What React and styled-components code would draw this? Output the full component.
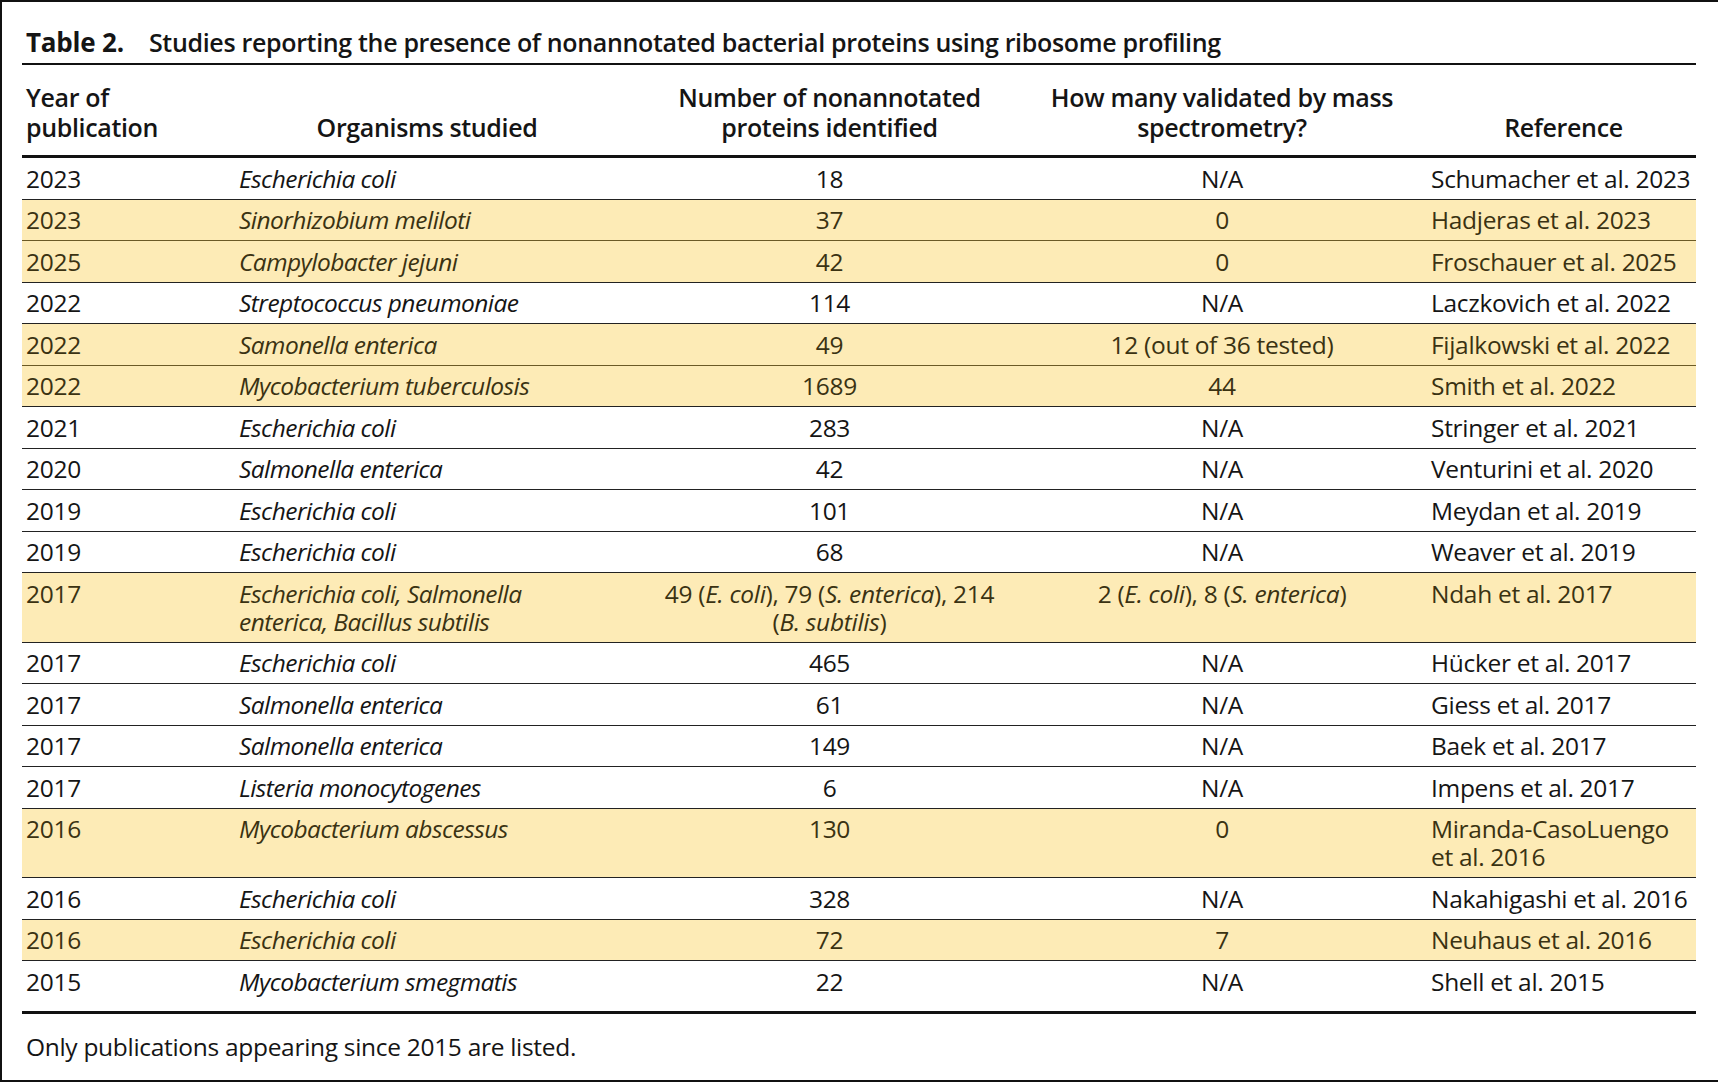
import styled, { createGlobalStyle } from "styled-components";

const GlobalStyle = createGlobalStyle`
  html, body {
    margin: 0;
    padding: 0;
    background: #ffffff;
  }
  body {
    font-family: "Open Sans", "Noto Sans", "Liberation Sans", sans-serif;
    color: #151515;
  }
`;

const rows = [
  { year: "2023", org: "Escherichia coli", num: "18", ms: "N/A", ref: "Schumacher et al. 2023" },
  { year: "2023", org: "Sinorhizobium meliloti", num: "37", ms: "0", ref: "Hadjeras et al. 2023", hl: true },
  { year: "2025", org: "Campylobacter jejuni", num: "42", ms: "0", ref: "Froschauer et al. 2025", hl: true },
  { year: "2022", org: "Streptococcus pneumoniae", num: "114", ms: "N/A", ref: "Laczkovich et al. 2022" },
  { year: "2022", org: "Samonella enterica", num: "49", ms: "12 (out of 36 tested)", ref: "Fijalkowski et al. 2022", hl: true },
  { year: "2022", org: "Mycobacterium tuberculosis", num: "1689", ms: "44", ref: "Smith et al. 2022", hl: true },
  { year: "2021", org: "Escherichia coli", num: "283", ms: "N/A", ref: "Stringer et al. 2021" },
  { year: "2020", org: "Salmonella enterica", num: "42", ms: "N/A", ref: "Venturini et al. 2020" },
  { year: "2019", org: "Escherichia coli", num: "101", ms: "N/A", ref: "Meydan et al. 2019" },
  { year: "2019", org: "Escherichia coli", num: "68", ms: "N/A", ref: "Weaver et al. 2019" },
  {
    year: "2017",
    org: (
      <>
        Escherichia coli, Salmonella
        <br />
        enterica, Bacillus subtilis
      </>
    ),
    num: (
      <>
        49 (<i>E. coli</i>), 79 (<i>S. enterica</i>), 214
        <br />
        (<i>B. subtilis</i>)
      </>
    ),
    ms: (
      <>
        2 (<i>E. coli</i>), 8 (<i>S. enterica</i>)
      </>
    ),
    ref: "Ndah et al. 2017",
    hl: true,
  },
  { year: "2017", org: "Escherichia coli", num: "465", ms: "N/A", ref: "Hücker et al. 2017" },
  { year: "2017", org: "Salmonella enterica", num: "61", ms: "N/A", ref: "Giess et al. 2017" },
  { year: "2017", org: "Salmonella enterica", num: "149", ms: "N/A", ref: "Baek et al. 2017" },
  { year: "2017", org: "Listeria monocytogenes", num: "6", ms: "N/A", ref: "Impens et al. 2017" },
  {
    year: "2016",
    org: "Mycobacterium abscessus",
    num: "130",
    ms: "0",
    ref: (
      <>
        Miranda-CasoLuengo
        <br />
        et al. 2016
      </>
    ),
    hl: true,
  },
  { year: "2016", org: "Escherichia coli", num: "328", ms: "N/A", ref: "Nakahigashi et al. 2016" },
  { year: "2016", org: "Escherichia coli", num: "72", ms: "7", ref: "Neuhaus et al. 2016", hl: true },
  { year: "2015", org: "Mycobacterium smegmatis", num: "22", ms: "N/A", ref: "Shell et al. 2015" },
];

function App() {
  return (
    <>
      <GlobalStyle />
      <Frame>
        <Caption>
          <CaptionLabel>Table 2.</CaptionLabel>
          <CaptionText>
            Studies reporting the presence of nonannotated bacterial proteins using ribosome profiling
          </CaptionText>
        </Caption>
        <Table>
          <HeadRow>
            <HeadCell>
              Year of
              <br />
              publication
            </HeadCell>
            <HeadCell align="center">Organisms studied</HeadCell>
            <HeadCell align="center">
              Number of nonannotated
              <br />
              proteins identified
            </HeadCell>
            <HeadCell align="center">
              How many validated by mass
              <br />
              spectrometry?
            </HeadCell>
            <HeadCell align="center" pad="31px">
              Reference
            </HeadCell>
          </HeadRow>
          {rows.map((r, i) => {
            const next = rows[i + 1];
            const last = i === rows.length - 1;
            return (
              <Row
                key={i}
                $hl={r.hl}
                $soft={r.hl && next && next.hl}
                $last={last}
              >
                <Cell>{r.year}</Cell>
                <Cell $italic>{r.org}</Cell>
                <Cell align="center">{r.num}</Cell>
                <Cell align="center">{r.ms}</Cell>
                <Cell pad="31px">{r.ref}</Cell>
              </Row>
            );
          })}
        </Table>
        <Footnote>Only publications appearing since 2015 are listed.</Footnote>
      </Frame>
    </>
  );
}

const Frame = styled.div`
  box-sizing: border-box;
  height: 1082px;
  border-top: 2px solid #111;
  border-left: 2px solid #111;
  border-bottom: 2px solid #111;
  padding-left: 20px;
  width: 1718px;
  overflow: hidden;
`;

const Caption = styled.div`
  width: 1674px;
  display: flex;
  align-items: baseline;
  padding: 24px 0 5px 4px;
  box-sizing: border-box;
  border-bottom: 2px solid #111;
  line-height: 32px;
  white-space: nowrap;
`;

const CaptionLabel = styled.span`
  font-size: 26px;
  font-weight: 700;
  letter-spacing: -0.2px;
  margin-right: 25px;
`;

const CaptionText = styled.span`
  font-size: 25px;
  font-weight: 600;
  letter-spacing: -0.33px;
`;

const Table = styled.div`
  width: 1674px;
  display: flex;
  flex-direction: column;
`;

const columns = "213px 380px 425px 360px 1fr";

const HeadRow = styled.div`
  display: grid;
  grid-template-columns: ${columns};
  align-items: end;
  padding: 18px 0 13px;
  border-bottom: 3px solid #111;
`;

const HeadCell = styled.div`
  font-size: 25px;
  font-weight: 600;
  line-height: 29.5px;
  letter-spacing: -0.35px;
  white-space: nowrap;
  text-align: ${(props) => props.align || "left"};
  padding-left: ${(props) => props.pad || "4px"};
`;

const Row = styled.div`
  display: grid;
  grid-template-columns: ${columns};
  align-items: start;
  padding: 6.5px 0 ${(props) => (props.$last ? "15px" : "6px")};
  background: ${(props) => (props.$hl ? "#fdebb6" : "transparent")};
  color: ${(props) => (props.$hl ? "#3a3212" : "#151515")};
  border-bottom: ${(props) =>
    props.$last
      ? "3px solid #111"
      : props.$soft
      ? "1px solid #6b5a26"
      : "1px solid #222"};
`;

const Cell = styled.div`
  font-size: 24.5px;
  line-height: 28px;
  letter-spacing: ${(props) => (props.$italic ? "-0.55px" : "-0.3px")};
  white-space: nowrap;
  font-style: ${(props) => (props.$italic ? "italic" : "normal")};
  text-align: ${(props) => props.align || "left"};
  padding-left: ${(props) => props.pad || "4px"};
`;

const Footnote = styled.div`
  margin-top: 18px;
  padding-left: 4px;
  font-size: 24.5px;
  line-height: 30px;
  letter-spacing: -0.3px;
`;

export default App;
